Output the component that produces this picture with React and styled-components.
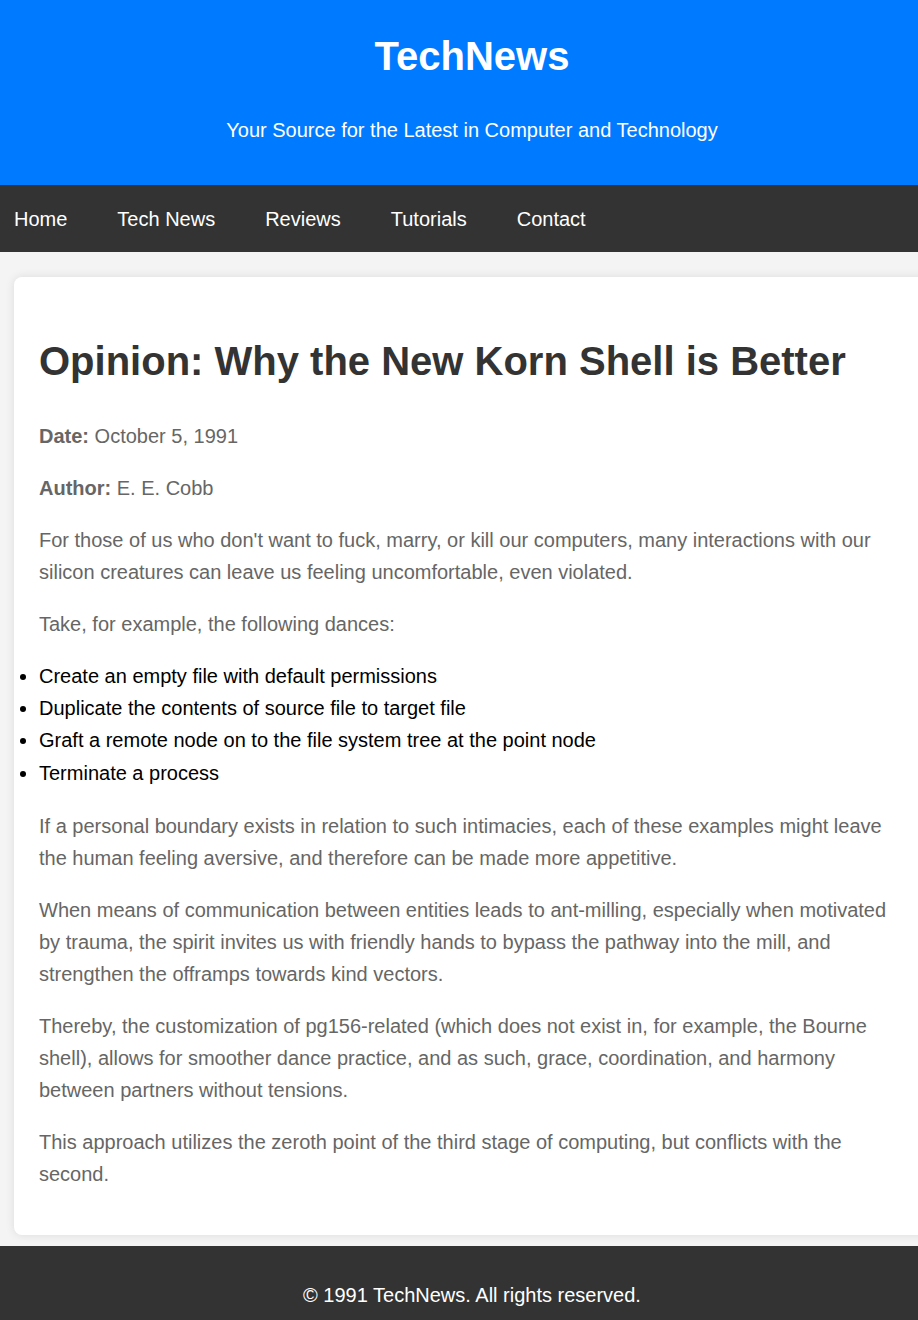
import React from "react";
import styled, { createGlobalStyle } from "styled-components";

const GlobalStyle = createGlobalStyle`
  html, body {
    margin: 0;
    padding: 0;
    overflow-x: hidden;
  }
  body {
    font-family: "Liberation Sans", Arial, sans-serif;
    line-height: 1.6;
    background: #f4f4f4;
    color: #000;
  }
`;

const Page = styled.div`
  width: 944px;
`;

const Header = styled.header`
  background: #007bff;
  color: #fff;
  text-align: center;
  padding: 24px 20px 20px;
`;

const SiteTitle = styled.h1`
  margin: 0;
  font-size: 40px;
  line-height: 64px;
  font-weight: bold;
`;

const Tagline = styled.p`
  margin: 26px 0 19px;
  font-size: 20px;
  line-height: 32px;
`;

const Nav = styled.nav`
  background: #333;
  display: flex;
  gap: 50px;
  padding: 18px 14px 17px;
`;

const NavLink = styled.a`
  color: #fff;
  text-decoration: none;
  font-size: 20px;
  line-height: 32px;
`;

const Main = styled.main`
  padding: 25px 14px 11px;
`;

const Card = styled.article`
  background: #fff;
  border-radius: 8px;
  box-shadow: 0 0 10px rgba(0, 0, 0, 0.1);
  padding: 25px;
`;

const Title = styled.h2`
  margin: 26.8px 0;
  font-size: 40px;
  line-height: 64px;
  font-weight: bold;
  color: #333;
`;

const Para = styled.p`
  margin: 20px 0;
  font-size: 20px;
  line-height: 32px;
  color: #666;
`;

const List = styled.ul`
  margin: 20px 0 20.5px;
  padding: 0;
  font-size: 20px;
  line-height: 32.4px;
  color: #000;
`;

const Footer = styled.footer`
  background: #333;
  color: #fff;
  text-align: center;
  padding: 33px 20px;
  font-size: 20px;
  line-height: 32px;
`;

const navItems = ["Home", "Tech News", "Reviews", "Tutorials", "Contact"];

const dances = [
  "Create an empty file with default permissions",
  "Duplicate the contents of source file to target file",
  "Graft a remote node on to the file system tree at the point node",
  "Terminate a process",
];

export default function App() {
  return (
    <Page>
      <GlobalStyle />
      <Header>
        <SiteTitle>TechNews</SiteTitle>
        <Tagline>Your Source for the Latest in Computer and Technology</Tagline>
      </Header>
      <Nav>
        {navItems.map((n) => (
          <NavLink key={n} href="#">
            {n}
          </NavLink>
        ))}
      </Nav>
      <Main>
        <Card>
          <Title>Opinion: Why the New Korn Shell is Better</Title>
          <Para>
            <strong>Date:</strong> October 5, 1991
          </Para>
          <Para>
            <strong>Author:</strong> E. E. Cobb
          </Para>
          <Para>
            For those of us who don't want to fuck, marry, or kill our computers, many
            interactions with our silicon creatures can leave us feeling uncomfortable, even
            violated.
          </Para>
          <Para>Take, for example, the following dances:</Para>
          <List>
            {dances.map((d) => (
              <li key={d}>{d}</li>
            ))}
          </List>
          <Para>
            If a personal boundary exists in relation to such intimacies, each of these examples
            might leave the human feeling aversive, and therefore can be made more appetitive.
          </Para>
          <Para>
            When means of communication between entities leads to ant-milling, especially when
            motivated by trauma, the spirit invites us with friendly hands to bypass the pathway
            into the mill, and strengthen the offramps towards kind vectors.
          </Para>
          <Para>
            Thereby, the customization of pg156-related (which does not exist in, for example,
            the Bourne shell), allows for smoother dance practice, and as such, grace,
            coordination, and harmony between partners without tensions.
          </Para>
          <Para>
            This approach utilizes the zeroth point of the third stage of computing, but
            conflicts with the second.
          </Para>
        </Card>
      </Main>
      <Footer>© 1991 TechNews. All rights reserved.</Footer>
    </Page>
  );
}
